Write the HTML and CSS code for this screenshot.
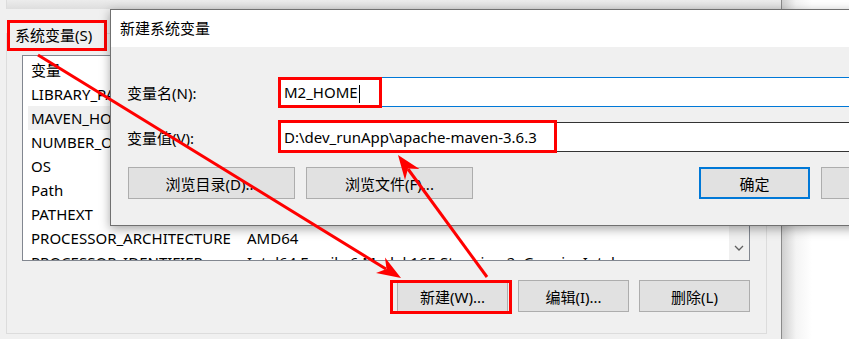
FILE: index.html
```html
<!DOCTYPE html>
<html lang="zh-CN">
<head>
    <meta charset="UTF-8">
    <meta name="viewport" content="width=device-width, initial-scale=1.0">
    <title>新建系统变量</title>
    <link rel="stylesheet" href="styles.css">
</head>
<body>
    <div class="screen">
        <div class="win">
            <div class="top-strip"></div>
            <div class="group">
                <div class="legend">系统变量(S)</div>
                <div class="list">
                    <div class="rows">
                        <div class="row"><span class="c1">变量</span></div>
                        <div class="row"><span class="c1">LIBRARY_PATH</span></div>
                        <div class="row selected"><span class="c1">MAVEN_HOME</span></div>
                        <div class="row"><span class="c1">NUMBER_OF_PROCESSORS</span></div>
                        <div class="row"><span class="c1">OS</span></div>
                        <div class="row"><span class="c1">Path</span></div>
                        <div class="row"><span class="c1">PATHEXT</span></div>
                        <div class="row"><span class="c1">PROCESSOR_ARCHITECTURE</span><span class="c2">AMD64</span></div>
                        <div class="row"><span class="c1">PROCESSOR_IDENTIFIER</span><span class="c2">Intel64 Family 6 Model 165 Stepping 2, GenuineIntel</span></div>
                    </div>
                    <div class="scrollbar">
                        <svg width="10" height="6" viewBox="0 0 10 6"><path d="M1 1 L5 5 L9 1" fill="none" stroke="#606060" stroke-width="1.3"/></svg>
                    </div>
                </div>
                <div class="btn-row">
                    <button class="btn">新建(W)...<span class="mark new-mark"></span></button>
                    <button class="btn">编辑(I)...</button>
                    <button class="btn">删除(L)</button>
                </div>
            </div>
        </div>
        <div class="side"></div>

        <div class="dialog">
            <div class="dlg-title">新建系统变量</div>
            <div class="dlg-body">
                <div class="field">
                    <label class="field-label">变量名(N):</label>
                    <div class="input focused"><span class="text">M2_HOME</span><span class="caret"></span><span class="mark name-mark"></span></div>
                </div>
                <div class="field">
                    <label class="field-label">变量值(V):</label>
                    <div class="input"><span class="text">D:\dev_runApp\apache-maven-3.6.3</span><span class="mark value-mark"></span></div>
                </div>
                <div class="dlg-buttons">
                    <button class="btn wide">浏览目录(D)...</button>
                    <button class="btn wide">浏览文件(F)...</button>
                    <button class="btn default">确定</button>
                    <button class="btn" aria-label="取消"></button>
                </div>
            </div>
        </div>

        <svg class="arrows" width="849" height="339" viewBox="0 0 849 339">
            <line x1="38" y1="55" x2="386" y2="269" stroke="#ff0000" stroke-width="3"/>
            <polygon points="401,278 376,273 386.5,269 385,257.5" fill="#ff0000"/>
            <line x1="487" y1="277" x2="408" y2="169" stroke="#ff0000" stroke-width="3"/>
            <polygon points="398,155 419.5,169 408,168.5 405,180" fill="#ff0000"/>
        </svg>
    </div>
</body>
</html>
```

FILE: styles.css
```css
* {
    box-sizing: border-box;
}
body {
    margin: 0;
    background-color: #ffffff;
    font-family: "Noto Sans", "Noto Sans CJK SC", sans-serif;
    font-size: 15px;
    color: #000;
}
.screen {
    position: relative;
    width: 849px;
    height: 339px;
    overflow: hidden;
    display: flex;
    background-color: #f0f0f0;
}
.win {
    width: 782px;
    height: 339px;
    border-right: 1px solid #8a8a8a;
    background-color: #f0f0f0;
}
.side {
    flex: 1;
    background: linear-gradient(to right, #cfcfcf, #f4f4f4 14px, #ffffff 30px);
}
.top-strip {
    height: 9px;
    margin-left: 6px;
    border-left: 1px solid #dcdcdc;
    background: linear-gradient(#ececec, #dedede);
}
.group {
    position: relative;
    width: 761px;
    height: 301px;
    margin: 24px 0 0 6px;
    border: 1px solid #dcdcdc;
    padding: 21px 16px 0 15px;
}
.legend {
    position: absolute;
    left: 0;
    top: -14px;
    width: 100px;
    height: 31px;
    padding-left: 5px;
    border: 3px solid #ff0000;
    background-color: #f0f0f0;
    line-height: 25px;
}

/* list view */
.list {
    display: flex;
    width: 728px;
    height: 206px;
    border: 1px solid #828790;
    background-color: #fff;
    overflow: hidden;
}
.rows {
    flex: 1;
    padding-top: 2px;
}
.row {
    display: flex;
    height: 24px;
    line-height: 24px;
    margin-left: 5px;
    padding-left: 3px;
    white-space: nowrap;
}
.row.selected {
    background-color: #f0f0f0;
}
.c1 {
    width: 216px;
}
.scrollbar {
    width: 20px;
    background-color: #f0f0f0;
    display: flex;
    flex-direction: column;
    justify-content: flex-end;
    align-items: center;
    padding-bottom: 9px;
}

/* buttons */
.btn {
    position: relative;
    flex-shrink: 0;
    width: 111px;
    height: 32px;
    border: 1px solid #adadad;
    background-color: #e1e1e1;
    font-family: inherit;
    font-size: 15px;
    color: #000;
    padding: 0;
}
.btn-row {
    display: flex;
    justify-content: flex-end;
    gap: 10px;
    margin-top: 19px;
}
.mark {
    position: absolute;
    border: 3px solid #ff0000;
}
.new-mark {
    left: -8px;
    top: -1px;
    right: -5px;
    bottom: -3px;
}

/* dialog */
.dialog {
    position: absolute;
    left: 110px;
    top: 9px;
    width: 760px;
    height: 217px;
    border: 1px solid #707070;
    background-color: #f0f0f0;
    box-shadow: 0 3px 10px rgba(0,0,0,0.35);
}
.dlg-title {
    height: 37px;
    line-height: 37px;
    padding-left: 9px;
    background-color: #fff;
}
.dlg-body {
    padding: 30px 0 0 16px;
}
.field {
    display: flex;
    align-items: center;
    margin-bottom: 15px;
}
.field-label {
    width: 152px;
    flex-shrink: 0;
}
.input {
    position: relative;
    flex: 1;
    height: 30px;
    line-height: 28px;
    padding-left: 4px;
    border: 1px solid #333;
    border-right: none;
    background-color: #fff;
    white-space: nowrap;
}
.input.focused {
    border-color: #0078d7;
}
.caret {
    display: inline-block;
    width: 1px;
    height: 18px;
    margin-left: 1px;
    vertical-align: middle;
    background-color: #000;
}
.name-mark {
    left: -2px;
    top: -1px;
    width: 104px;
    height: 31px;
}
.value-mark {
    left: -2px;
    top: -3px;
    width: 279px;
    height: 33px;
}
.dlg-buttons {
    display: flex;
    gap: 11px;
    margin-top: 6px;
    padding-left: 1px;
}
.btn.wide {
    width: 167px;
}
.btn.default {
    margin-left: 215px;
    border: 2px solid #0078d7;
}

.arrows {
    position: absolute;
    left: 0;
    top: 0;
    pointer-events: none;
}
```
